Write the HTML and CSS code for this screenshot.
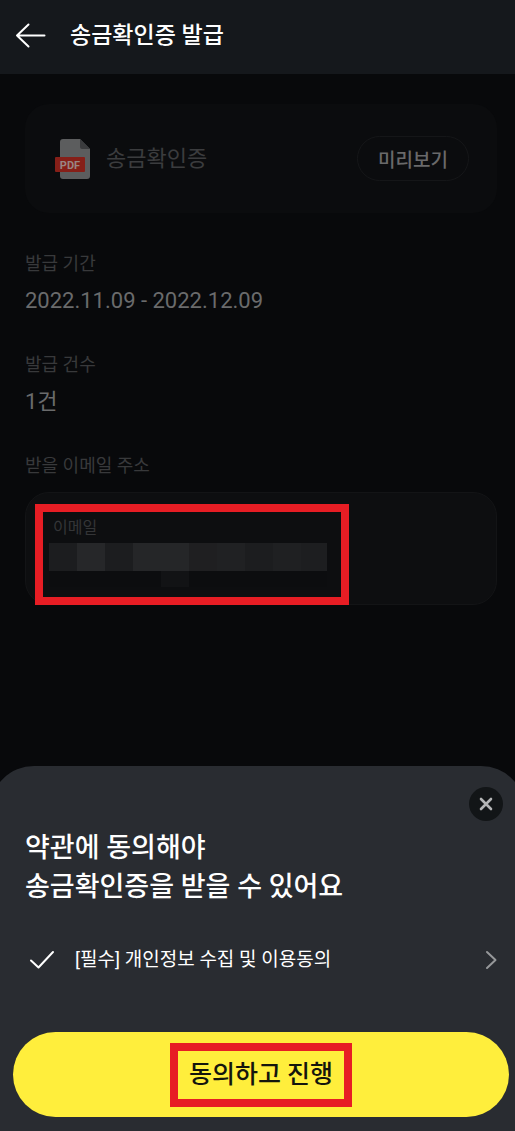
FILE: index.html
```html
<!DOCTYPE html>
<html lang="ko">
<head>
  <meta charset="UTF-8" />
  <title>송금확인증 발급</title>
  <meta name="viewport" content="width=device-width, initial-scale=1.0"/>
  <link rel="stylesheet" href="styles.css">
</head>
<body>
  <div class="screen">
    <!-- 상단 바 -->
    <header class="header">
      <button class="back-btn" type="button" aria-label="뒤로">
        <svg width="32" height="28" viewBox="0 0 32 28" fill="none" stroke="#fff" stroke-width="2" stroke-linecap="round" stroke-linejoin="round">
          <path d="M13.500 2.500L2 13.500l11.500 11M2 13.500h27.500"/>
        </svg>
      </button>
      <h1>송금확인증 발급</h1>
    </header>

    <main class="content">
      <!-- 미리보기 카드 -->
      <div class="doc-card">
        <svg class="pdf-icon" width="36" height="40" viewBox="0 0 36 40">
          <path fill="#5c5d5e" d="M8 0h17l10 10v27a3 3 0 0 1-3 3H8a3 3 0 0 1-3-3V3a3 3 0 0 1 3-3z"/>
          <path fill="#3b3c3e" d="M25 0l10 10h-8a2 2 0 0 1-2-2z"/>
          <rect y="18" width="30" height="15" rx="1" fill="#861f18"/>
          <text x="15" y="30" class="pdf-text" text-anchor="middle">PDF</text>
        </svg>
        <span class="doc-name">송금확인증</span>
        <button class="preview-btn" type="button">미리보기</button>
      </div>

      <dl class="info">
        <div class="info-item">
          <dt>발급 기간</dt>
          <dd>2022.11.09 - 2022.12.09</dd>
        </div>
        <div class="info-item">
          <dt>발급 건수</dt>
          <dd>1건</dd>
        </div>
      </dl>

      <!-- 이메일 입력 -->
      <h2 class="field-title">받을 이메일 주소</h2>
      <div class="email-field">
        <label for="email">이메일</label>
        <div class="email-value">
          <input id="email" type="email">
          <svg class="mosaic" width="278" height="44" viewBox="0 0 278 44" shape-rendering="crispEdges">
            <rect width="278" height="28" fill="#1c1d1f"/>
            <rect x="28" width="28" height="28" fill="#262729"/>
            <rect x="84" width="56" height="28" fill="#252628"/>
            <rect x="140" width="28" height="28" fill="#1f1f21"/>
            <rect x="168" width="28" height="28" fill="#202123"/>
            <rect x="224" width="28" height="28" fill="#1f2022"/>
            <rect x="252" width="26" height="28" fill="#1d1e20"/>
            <rect y="28" width="278" height="16" fill="#0c0d0f"/>
            <rect x="112" y="28" width="28" height="16" fill="#121315"/>
          </svg>
        </div>
        <div class="mark email-mark"></div>
      </div>
    </main>

    <!-- 약관 동의 시트 -->
    <section class="sheet">
      <button class="close-btn" type="button" aria-label="닫기">
        <svg width="14" height="14" viewBox="0 0 14 14" fill="none" stroke="#b4b5b6" stroke-width="2.600" stroke-linecap="round">
          <path d="M2 2l10 10M12 2L2 12"/>
        </svg>
      </button>
      <h2 class="sheet-title">약관에 동의해야<br>송금확인증을 받을 수 있어요</h2>
      <div class="agree-row">
        <label class="agree">
          <span class="check">
            <input type="checkbox" checked>
            <svg width="26" height="20" viewBox="0 0 26 20" fill="none" stroke="#fff" stroke-width="2" stroke-linecap="round" stroke-linejoin="round">
              <path d="M2 10.500l7.500 7L24 2"/>
            </svg>
          </span>
          <span>[필수] 개인정보 수집 및 이용동의</span>
        </label>
        <a class="more" href="#" aria-label="약관 보기">
          <svg width="12" height="20" viewBox="0 0 12 20" fill="none" stroke="#96989a" stroke-width="2" stroke-linecap="round" stroke-linejoin="round">
            <path d="M2 2l8.500 8L2 18"/>
          </svg>
        </a>
      </div>
      <button class="submit-btn" type="button"><span class="mark submit-mark">동의하고 진행</span></button>
    </section>
  </div>
</body>
</html>
```
FILE: styles.css
```css
* {
  box-sizing: border-box;
}
body {
  margin: 0;
  background: #08090b;
  color: #fff;
  font-family: Roboto, "Noto Sans CJK KR", sans-serif;
}
h1, h2, dl, dd {
  margin: 0;
}
button {
  padding: 0;
  border: none;
  background: none;
  color: inherit;
  font-family: inherit;
  cursor: pointer;
}
svg {
  display: block;
}

.screen {
  min-height: 100vh;
  display: flex;
  flex-direction: column;
  overflow: hidden;
}

/* 상단 바 */
.header {
  display: flex;
  align-items: center;
  gap: 23px;
  height: 74px;
  padding: 0 15px 2px;
  background: #15181c;
}
.header h1 {
  font-size: 23px;
  line-height: 32px;
  font-weight: 500;
}

/* 본문 */
.content {
  flex: 1;
  padding: 30px 18px 30px 25px;
}
.doc-card {
  display: flex;
  align-items: center;
  height: 109px;
  padding: 0 28px 0 30px;
  border-radius: 24px;
  background: #0b0c0e;
}
.pdf-text {
  font-size: 11px;
  font-weight: 700;
  fill: #9a8583;
}
.doc-name {
  flex: 1;
  margin-left: 15px;
  font-size: 22px;
  line-height: 32px;
  color: #3b3c3e;
}
.preview-btn {
  width: 112px;
  height: 45px;
  border: 1px solid #151618;
  border-radius: 23px;
  font-size: 19px;
  font-weight: 500;
  color: #69696a;
}
.info {
  display: flex;
  flex-direction: column;
  gap: 35px;
  margin: 38px 0 35px;
}
.info-item {
  display: flex;
  flex-direction: column;
  gap: 8px;
}
.info dt,
.field-title {
  font-size: 18px;
  line-height: 26px;
  font-weight: 400;
  color: #38393b;
}
.info dd {
  font-size: 22px;
  line-height: 32px;
  color: #6a6b6c;
}

/* 이메일 입력 */
.email-field {
  position: relative;
  height: 113px;
  margin-top: 13px;
  padding: 23px;
  border: 1px solid #131416;
  border-radius: 24px;
  background: #0d0e10;
}
.email-field label {
  display: block;
  padding-left: 4px;
  font-size: 16px;
  line-height: 24px;
  color: #343537;
}
.email-value {
  position: relative;
  margin-top: 3px;
}
.email-value input {
  display: block;
  width: 100%;
  height: 44px;
  padding: 0;
  border: none;
  outline: none;
  background: transparent;
  color: #6a6b6c;
  font-size: 22px;
}
.mosaic {
  position: absolute;
  top: 0;
  left: 0;
}
.mark {
  border: 8px solid #e71d24;
}
.email-mark {
  position: absolute;
  top: 11px;
  left: 9px;
  width: 314px;
  height: 101px;
  pointer-events: none;
}

/* 약관 동의 시트 */
.sheet {
  display: flex;
  flex-direction: column;
  margin: 0 -10px;
  padding: 21px 16px 14px 23px;
  border-radius: 44px 44px 0 0;
  background: #292c31;
}
.close-btn {
  display: flex;
  align-items: center;
  justify-content: center;
  align-self: flex-end;
  width: 34px;
  height: 34px;
  margin-right: 6px;
  border-radius: 50%;
  background: #121517;
}
.sheet-title {
  margin: 8px 12px 0;
  font-size: 27px;
  line-height: 39px;
  font-weight: 500;
}
.agree-row {
  display: flex;
  align-items: center;
  justify-content: space-between;
  height: 40px;
  margin: 33px 12px 52px 16px;
}
.agree {
  display: flex;
  align-items: center;
  gap: 20px;
  font-size: 19px;
  line-height: 28px;
}
.check {
  display: grid;
}
.check input,
.check svg {
  grid-area: 1 / 1;
}
.check input {
  width: 26px;
  height: 20px;
  margin: 0;
  opacity: 0;
}
.submit-btn {
  display: flex;
  align-items: center;
  justify-content: center;
  height: 85px;
  border-radius: 43px;
  background: #ffee3c;
  color: #14150d;
  font-size: 25px;
  font-weight: 500;
}
.submit-mark {
  padding: 8px 11px;
  line-height: 32px;
}
```
